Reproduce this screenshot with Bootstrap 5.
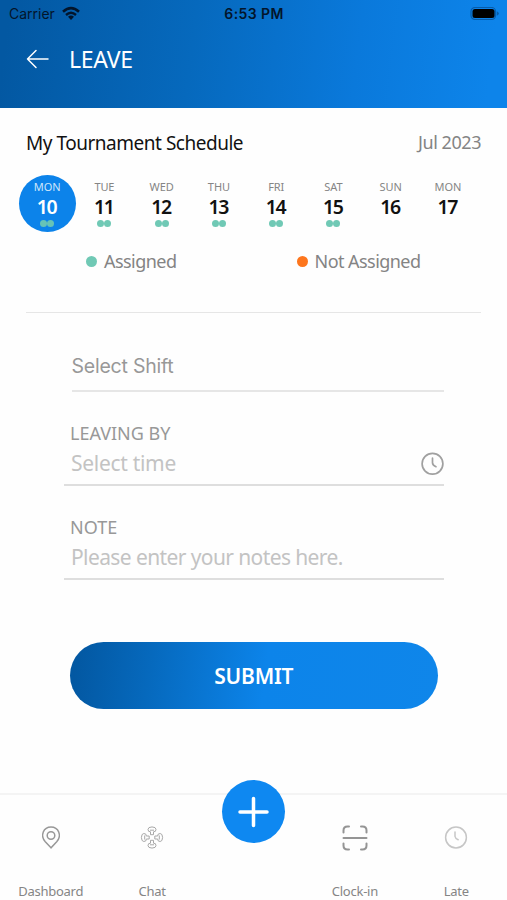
<!DOCTYPE html>
<html lang="en">
<head>
<meta charset="utf-8">
<meta name="viewport" content="width=device-width, initial-scale=1">
<title>Leave</title>
<link rel="stylesheet" href="https://cdn.jsdelivr.net/npm/bootstrap@5.3.0/dist/css/bootstrap.min.css">
<style>
body { font-family: "Noto Sans", "Open Sans", sans-serif; background: #fefefe; color: #111; }
.screen { height: 900px; overflow: hidden; white-space: nowrap; }
.top-area { height: 107.5px; background: linear-gradient(97deg, #0358a2 2%, #0669bd 38%, #0a79db 70%, #0d84ea 96%); }
.status { height: 28px; font: 14px/28px Inter, sans-serif; color: #03152b; padding: 0 8px 0 9px; grid-template-columns: 1fr auto 1fr; }
.status .time { font-weight: 600; letter-spacing: .4px; }
.title-row { height: 62px; padding-left: 26px; gap: 20px; }
.title-row h1 { font-size: 23px; line-height: 30px; font-weight: 400; letter-spacing: -.3px; }
.heading { padding: 20px 26px 0; line-height: 30px; }
.heading h2 { font-size: 19px; line-height: 30px; font-weight: 400; letter-spacing: -.48px; }
.heading .month { font-size: 18px; color: #848484; letter-spacing: -.45px; line-height: 29px; }
.days { margin: 17px 30.5px 0 18.5px; }
.day { height: 57.5px; padding-top: 4.5px; }
.day .dow { font-size: 11px; line-height: 15px; color: #858585; letter-spacing: -.1px; }
.day .num { font-size: 19.5px; line-height: 26px; height: 25px; font-weight: 600; letter-spacing: -1.2px; text-indent: -1px; }
.day .dots { height: 7px; margin-top: 1px; }
.day .dots i { width: 7px; height: 7px; border-radius: 50%; background: #70c9b5; }
.day.active { border-radius: 50%; background: #0c83ea; color: #fff; }
.day.active .dow { color: #cfe6fb; }
.day.active .dots i { background: #67c3b7; }
.legend { height: 30px; margin: 14.5px 0 0 86px; font-size: 18px; color: #848484; letter-spacing: -.55px; }
.legend i { width: 11px; height: 11px; border-radius: 50%; margin-right: 7px; }
.legend .first { width: 210.5px; }
.legend .yes { background: #70c9b5; }
.legend .no { background: #fd761d; }
.rule { height: 1px; background: #e6e6e6; margin: 35px 26px 1px; }
.fields { margin: 0 63.5px 0 64px; }
.shift { height: 78px; margin-left: 7.5px; padding-bottom: 9px; border-bottom: 2px solid #e6e6e6; font: 19.5px/30px Inter, sans-serif; letter-spacing: -.22px; color: #989898; }
.entry { height: 94px; padding: 27px 0 0 6px; border-bottom: 2px solid #dedede; }
.entry label { font-size: 18px; line-height: 28px; color: #989898; letter-spacing: 0; }
.entry .hint { font-size: 21px; line-height: 30px; color: #c3c3c3; padding: 1px 0 0 1px; letter-spacing: -.3px; }
.entry .note { letter-spacing: -.6px; }
.submit { height: 67px; margin: 62px 69.5px 0 70px; padding-top: 9px; border: 0; font-size: 21px; font-weight: 600; letter-spacing: -.2px; color: #fff; background: linear-gradient(97deg, #0358a2 2%, #0669bd 22%, #0c84ea 53%, #0f86ea 100%); }
.bottom { height: 107px; margin-top: 84px; border-top: 2px solid #f4f4f4; }
.tab { width: 20%; padding-top: 24px; font-size: 13px; color: #858585; letter-spacing: -.25px; }
.tab svg { display: block; flex: none; margin-bottom: 26px; }
.tab span { line-height: 20px; }
.plus { width: 63px; height: 63px; border-radius: 50%; background: #0e88f1; margin: -14.5px 0 0 1px; }
</style>
</head>
<body>
<div class="screen d-flex flex-column">
  <header class="top-area flex-shrink-0">
    <div class="status d-grid">
      <div class="d-flex align-items-center"><span>Carrier</span>
        <svg class="ms-1" width="22" height="16" viewBox="-2 .5 22 16" fill="none" stroke="#03152b"><path d="M2 6.200Q10-1 18 6.200" stroke-width="2.600"/><path d="M5 9.500q5-4.400 10 0" stroke-width="2.400"/><path d="M7 11.300q3-2.400 6 0L10 14.500z" fill="#03152b" stroke="none"/></svg>
      </div>
      <div class="time">6:53 PM</div>
      <div class="d-flex justify-content-end align-items-center">
        <svg width="30" height="15" viewBox="-.5 1 30 15"><rect x="1.500" y="1.500" width="24.500" height="12" rx="4" fill="none" stroke="#075caa" stroke-width="1.200"/><rect x="3" y="3" width="22" height="9" rx="2.500" fill="#000"/><path d="M27.300 5.300v4.500q2-.6 2-2.200t-2-2.300z" fill="#075caa"/></svg>
      </div>
    </div>
    <div class="title-row d-flex align-items-center">
      <svg width="23" height="20" viewBox="0 0 23 20" fill="none" stroke="#fff" stroke-width="1.500" stroke-linecap="round" stroke-linejoin="round"><path d="M22 10H1.500M10 1.500L1.500 10l8.500 8.500"/></svg>
      <h1 class="m-0 text-white">LEAVE</h1>
    </div>
  </header>

  <main>
    <div class="heading d-flex justify-content-between">
      <h2 class="m-0">My Tournament Schedule</h2>
      <span class="month">Jul 2023</span>
    </div>
    <div class="days d-flex text-center">
      <div class="day active flex-fill w-100"><div class="dow">MON</div><div class="num">10</div><div class="dots d-flex justify-content-center"><i></i><i></i></div></div>
      <div class="day flex-fill w-100"><div class="dow">TUE</div><div class="num">11</div><div class="dots d-flex justify-content-center"><i></i><i></i></div></div>
      <div class="day flex-fill w-100"><div class="dow">WED</div><div class="num">12</div><div class="dots d-flex justify-content-center"><i></i><i></i></div></div>
      <div class="day flex-fill w-100"><div class="dow">THU</div><div class="num">13</div><div class="dots d-flex justify-content-center"><i></i><i></i></div></div>
      <div class="day flex-fill w-100"><div class="dow">FRI</div><div class="num">14</div><div class="dots d-flex justify-content-center"><i></i><i></i></div></div>
      <div class="day flex-fill w-100"><div class="dow">SAT</div><div class="num">15</div><div class="dots d-flex justify-content-center"><i></i><i></i></div></div>
      <div class="day flex-fill w-100"><div class="dow">SUN</div><div class="num">16</div></div>
      <div class="day flex-fill w-100"><div class="dow">MON</div><div class="num">17</div></div>
    </div>
    <div class="legend d-flex">
      <div class="first d-flex align-items-center"><i class="yes"></i><span>Assigned</span></div>
      <div class="d-flex align-items-center"><i class="no"></i><span>Not Assigned</span></div>
    </div>
    <div class="rule"></div>
    <form class="d-flex flex-column">
      <div class="fields">
        <div class="shift d-flex align-items-end">Select Shift</div>
        <div class="entry">
          <label class="d-block">LEAVING BY</label>
          <div class="hint d-flex justify-content-between align-items-center"><span>Select time</span>
            <svg width="24" height="24" viewBox="0 -.7 24 24" fill="none" stroke="#a0a0a0" stroke-width="1.700" stroke-linecap="round"><circle cx="12.500" cy="12" r="10.400"/><path d="M12.500 6.500v4.500q0 2.500 3.500 4"/></svg>
          </div>
        </div>
        <div class="entry">
          <label class="d-block">NOTE</label>
          <div class="hint note">Please enter your notes here.</div>
        </div>
      </div>
      <button type="button" class="submit btn rounded-pill">SUBMIT</button>
    </form>
  </main>

  <nav class="bottom d-flex flex-shrink-0">
    <div class="tab d-flex flex-column align-items-center">
      <svg width="26" height="36" viewBox="0 0 26 36" fill="none" stroke="#989898" stroke-width="1.500"><path d="M13 28.800L7.300 22.800C1.800 16.500 5.500 8 13 8S24.200 16.500 18.700 22.800z"/><circle cx="13" cy="16.500" r="3.800"/></svg>
      <span>Dashboard</span>
    </div>
    <div class="tab d-flex flex-column align-items-center">
      <svg width="26" height="36" viewBox="0 0 26 36" fill="none" stroke="#a8a8a8" stroke-width="1"><g id="person"><path d="M10 8.600q3-1.400 6 0 1.800 1.600.4 3.700l-1.900.5v2.900h-3v-2.900l-1.900-.5q-1.400-2.100.4-3.700z"/><path d="M11 11.200h4"/></g><use href="#person" transform="rotate(90 13 18.500)"/><use href="#person" transform="rotate(180 13 18.500)"/><use href="#person" transform="rotate(270 13 18.500)"/></svg>
      <span>Chat</span>
    </div>
    <div class="tab pt-0 d-flex flex-column align-items-center">
      <div class="plus">
        <svg class="m-0" width="63" height="63" viewBox="0 0 63 63" fill="none" stroke="#fff" stroke-width="3.500" stroke-linecap="round"><path d="M31.500 18.500v27M18 32h27"/></svg>
      </div>
    </div>
    <div class="tab d-flex flex-column align-items-center">
      <svg width="26" height="36" viewBox="0 0 26 36" fill="none" stroke="#959595" stroke-width="2" stroke-linecap="round"><path d="M1.500 19h23"/><path d="M1.500 13.500v-2q0-4 4-4H7M19 7.500h1.500q4 0 4 4v2M1.500 24.500v2q0 4 4 4H7M19 30.500h1.500q4 0 4-4v-2"/></svg>
      <span>Clock-in</span>
    </div>
    <div class="tab d-flex flex-column align-items-center">
      <svg width="26" height="36" viewBox="0 0 26 36" fill="none" stroke="#c6c6c6" stroke-width="1.500" stroke-linecap="round"><circle cx="13" cy="18.500" r="10.400"/><path d="M12 13v4.500q.3 2 3.200 3.300"/></svg>
      <span>Late</span>
    </div>
  </nav>
</div>
<script src="https://cdn.jsdelivr.net/npm/bootstrap@5.3.0/dist/js/bootstrap.bundle.min.js"></script>
</body>
</html>
